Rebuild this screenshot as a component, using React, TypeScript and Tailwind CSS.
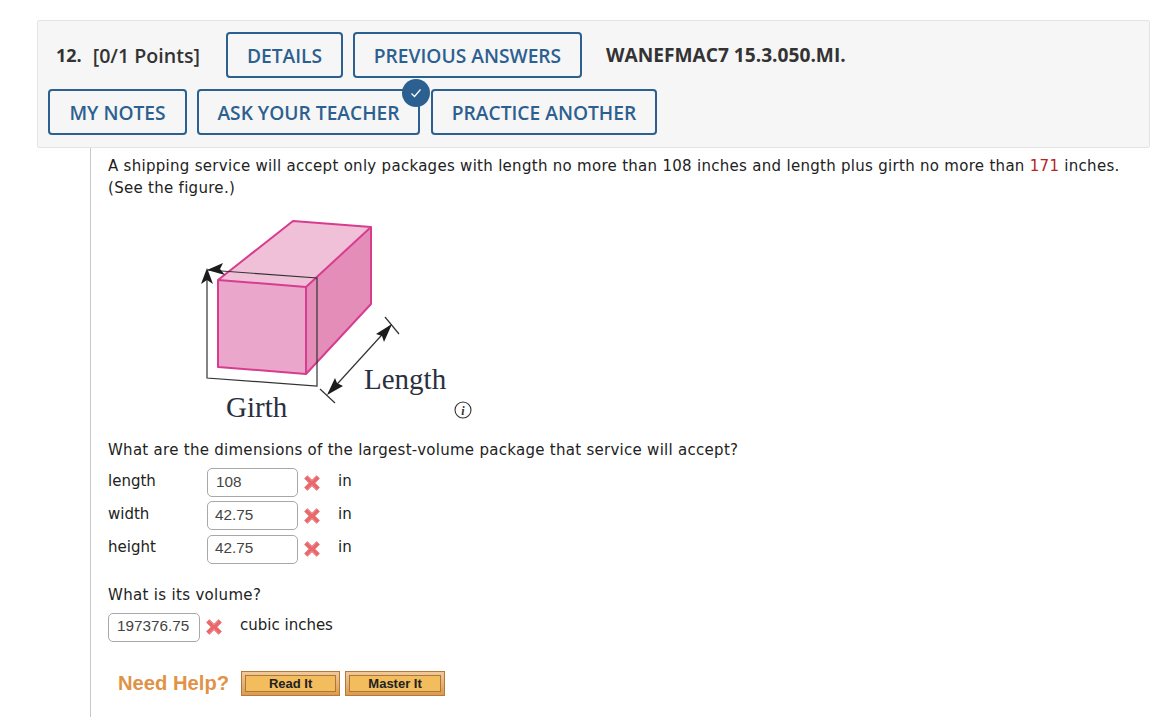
const headerFont = "font-['Open_Sans',sans-serif]";

function OutlineButton({ label, className }: { label: string; className: string }) {
  return (
    <button className={`h-[46px] rounded-[4px] border-2 border-[#2c6090] bg-transparent pt-[2px] text-[19.2px] font-semibold text-[#2c6090] ${className}`}>
      {label}
    </button>
  );
}

function XMark() {
  return (
    <svg width="18" height="18" viewBox="0 0 18 18" className="block shrink-0">
      <path d="M2.8 2.8 L15.2 15.2 M15.2 2.8 L2.8 15.2" stroke="#e8686c" strokeWidth="4.6" strokeLinecap="butt" />
      <path d="M4.5 2.5 L9 7 L13.5 2.5 M4.5 15.5 L9 11 L13.5 15.5" fill="none" stroke="#ee8f92" strokeWidth="0.8" />
    </svg>
  );
}

function AnswerInput({ value, className }: { value: string; className: string }) {
  return (
    <div className={`flex h-[29px] items-center rounded-[5px] border border-[#a8a8a8] pb-[2px] font-['Liberation_Sans',sans-serif] text-[15.3px] text-[#444] ${className}`}>
      {value}
    </div>
  );
}

function HelpButton({ label, className }: { label: string; className: string }) {
  return (
    <div className={`h-[25px] border border-[#b5793a] bg-gradient-to-b from-[#f0c99a] to-[#dd9a4c] p-[3px] ${className}`}>
      <div className="flex h-full items-center justify-center border border-[#a9783a] bg-[#f3bc5d] pt-[2px] font-['Liberation_Sans',sans-serif] text-[13px] font-bold text-[#222]">
        {label}
      </div>
    </div>
  );
}

function Figure() {
  return (
    <svg width="290" height="220" viewBox="0 0 290 220" className="ml-[82px] block">
      <path d="M28 70 L103 11 L181 17 L181 94 L116 164 L116 77 Z" fill="#e48db8" />
      <path d="M28 70 L103 11 L181 17 L116 77 Z" fill="#efc0d7" />
      <path d="M28 70 L116 77 L116 164 L28 157 Z" fill="#eba6cb" />
      <path d="M28 70 L103 11 L181 17 L181 94 L116 164 L28 157 Z M28 70 L116 77 L181 17 M116 77 L116 164" fill="none" stroke="#d63d8f" strokeWidth="2" strokeLinejoin="round" />
      <path d="M18 60 L127 68 L127 176 L17 168 L17 64" fill="none" stroke="#333" strokeWidth="1.2" />
      <path d="M17 58 L11 74 L17 70 L23 74 Z" fill="#1c1c1c" />
      <path d="M17 60 L33 53 L30 59 L35 65 Z" fill="#1c1c1c" />
      <path d="M195 107 L209 124" stroke="#333" strokeWidth="1.2" />
      <path d="M130 179 L145 193" stroke="#333" strokeWidth="1.2" />
      <path d="M200 116 L139 183" stroke="#333" strokeWidth="1.2" />
      <path d="M202 114 L186 124 L192 126 L194 132 Z" fill="#1c1c1c" />
      <path d="M137 185 L153 176 L147 173 L145 168 Z" fill="#1c1c1c" />
      <text x="174" y="179" fontFamily="'Liberation Serif', serif" fontSize="29" fill="#2a3040">Length</text>
      <text x="36" y="207" fontFamily="'Liberation Serif', serif" fontSize="29" fill="#2a3040">Girth</text>
      <circle cx="273" cy="200" r="8" fill="none" stroke="#333" strokeWidth="1.1" />
      <text x="273" y="204.5" textAnchor="middle" fontFamily="'Liberation Serif', serif" fontStyle="italic" fontWeight="700" fontSize="12" fill="#333">i</text>
    </svg>
  );
}

export default function App() {
  const rows = [
    { name: "length", value: "108", pad: "pl-[8px]" },
    { name: "width", value: "42.75", pad: "pl-[7px]" },
    { name: "height", value: "42.75", pad: "pl-[7px]" },
  ];

  return (
    <div className="h-[717px] w-[1170px] overflow-hidden bg-white pt-[20px] font-['DejaVu_Sans',sans-serif] text-[15px] text-[#222]">
      {/* Question header */}
      <div className={`relative ml-[37px] h-[128px] w-[1113px] rounded-[2px] border border-[#e4e4e4] bg-[#f6f6f6] ${headerFont}`}>
        <div className="flex h-[46px] items-center mt-[11px] ml-[18px]">
          <span className="pt-[1px] text-[18px] font-bold text-[#333]">12.</span>
          <span className="ml-[11px] pt-[1px] text-[19.6px] font-semibold text-[#333]">[0/1 Points]</span>
          <OutlineButton label="DETAILS" className="ml-[26px] w-[117px]" />
          <OutlineButton label="PREVIOUS ANSWERS" className="ml-[10px] w-[229px]" />
          <span className="ml-[24px] pt-[1px] text-[19.15px] font-bold text-[#333]">WANEFMAC7 15.3.050.MI.</span>
        </div>
        <div className="mt-[11px] ml-[10px] flex">
          <OutlineButton label="MY NOTES" className="w-[139px]" />
          <div className="relative ml-[10px]">
            <OutlineButton label="ASK YOUR TEACHER" className="w-[223px]" />
            <span className="absolute right-[-10px] top-[-10px] flex h-[28px] w-[28px] items-center justify-center rounded-full bg-[#2c6090]">
              <svg width="14" height="14" viewBox="0 0 14 14">
                <path d="M2.5 7.5 L5.5 10.5 L11.5 3.5" fill="none" stroke="#fff" strokeWidth="1.2" />
              </svg>
            </span>
          </div>
          <OutlineButton label="PRACTICE ANOTHER" className="ml-[11px] w-[226px]" />
        </div>
      </div>

      {/* Question body */}
      <div className="ml-[90px] h-[569px] border-l border-[#c8c8c8] pl-[17px] pt-[6px] leading-[22px]">
        <p className="w-[1030px] pt-[1px] tracking-[0.29px]">
          A shipping service will accept only packages with length no more than 108 inches and length plus girth no more than <span className="text-[#b3261e]">171</span> inches.
          <br />
          (See the figure.)
        </p>

        <div className="mt-[11px]">
          <Figure />
        </div>

        <p className="mt-[9px] tracking-[0.28px]">What are the dimensions of the largest-volume package that service will accept?</p>

        <div className="mt-[7px] flex flex-col gap-[4.3px]">
          {rows.map((row) => (
            <div key={row.name} className="flex h-[29px] items-center">
              <span className="w-[99px] -translate-y-[2px]">{row.name}</span>
              <AnswerInput value={row.value} className={`w-[91px] ${row.pad}`} />
              <span className="ml-[5px]"><XMark /></span>
              <span className="ml-[17px] -translate-y-[2px]">in</span>
            </div>
          ))}
        </div>

        <p className="mt-[20px] tracking-[0.32px]">What is its volume?</p>

        <div className="mt-[7px] flex h-[29px] items-center">
          <AnswerInput value="197376.75" className="w-[92px] pl-[8px]" />
          <span className="ml-[5px]"><XMark /></span>
          <span className="ml-[17px] -translate-y-[2px]">cubic inches</span>
        </div>

        <div className="mt-[29px] ml-[10px] flex items-center">
          <span className="font-['Liberation_Sans',sans-serif] text-[20.2px] font-bold text-[#e09347]">Need Help?</span>
          <HelpButton label="Read It" className="ml-[12px] w-[99px]" />
          <HelpButton label="Master It" className="ml-[5px] w-[100px]" />
        </div>
      </div>
    </div>
  );
}
